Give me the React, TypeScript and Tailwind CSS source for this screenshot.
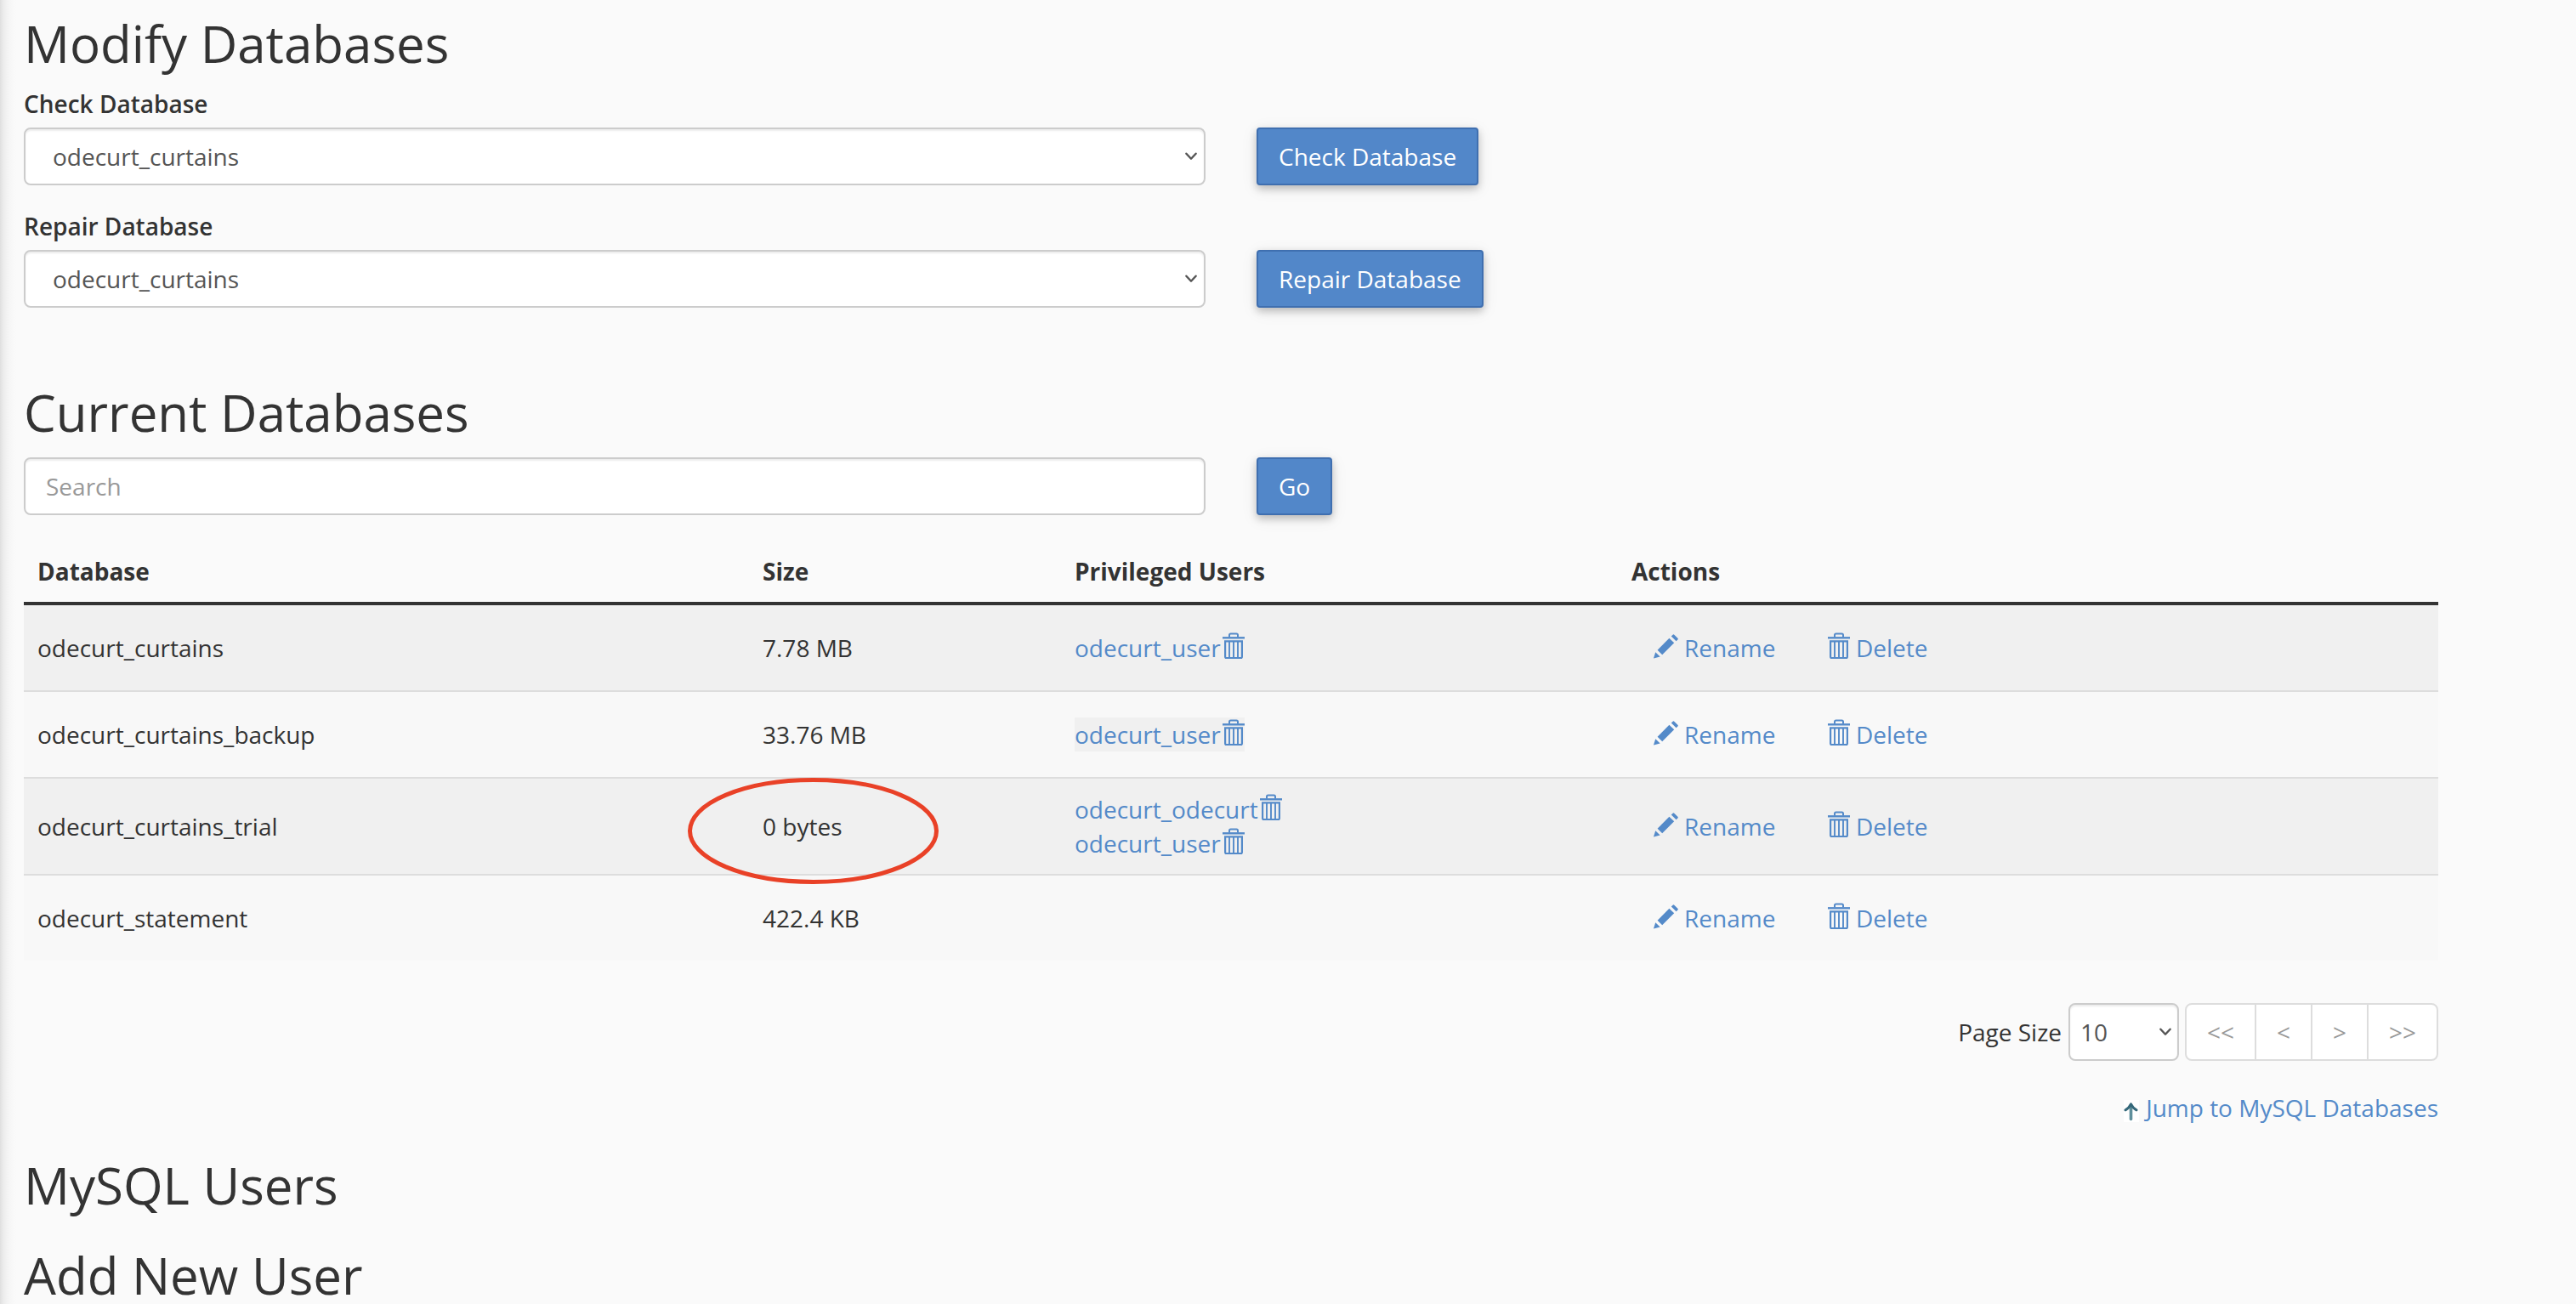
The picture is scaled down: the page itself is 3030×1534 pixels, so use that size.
import React from "react";

const databases = [
  { name: "odecurt_curtains", size: "7.78 MB", users: ["odecurt_user"] },
  { name: "odecurt_curtains_backup", size: "33.76 MB", users: ["odecurt_user"], highlight: true },
  { name: "odecurt_curtains_trial", size: "0 bytes", users: ["odecurt_odecurt", "odecurt_user"], circled: true },
  { name: "odecurt_statement", size: "422.4 KB", users: [] },
];

function TrashIcon() {
  return (
    <svg className="h-8 w-[26px] shrink-0" viewBox="0 0 26 32" fill="none" stroke="currentColor" strokeWidth="2">
      <path d="M0 7.3h26" strokeWidth="2.4" />
      <path d="M8 6.5V4a1.6 1.6 0 0 1 1.6-1.6h6.8A1.6 1.6 0 0 1 18 4v2.5" />
      <path d="M3.1 11.4h19.8v18.2a1.6 1.6 0 0 1-1.6 1.6H4.700a1.6 1.6 0 0 1-1.6-1.6z" strokeWidth="2.2" />
      <path d="M8 12v19M13 12v19M18 12v19" strokeWidth="1.900" />
    </svg>
  );
}

function PencilIcon() {
  return (
    <svg className="h-[29px] w-[29px] shrink-0" viewBox="0 0 29 29" fill="currentColor">
      <path d="M0 28.5 2.2 21.2 7.7 26.5z" />
      <path d="M4.6 18.7 18.4 4.7 24.2 10.3 10.2 24.2z" />
      <path d="M20.8 2.500 22.6.7a1.2 1.2 0 0 1 1.7 0L28.4 4.8a1.2 1.2 0 0 1 0 1.7L26.6 8.3z" />
    </svg>
  );
}

function Chevron() {
  return (
    <svg className="h-[10px] w-[14px] shrink-0" viewBox="0 0 14 10" fill="none" stroke="#555" strokeWidth="2.4" strokeLinecap="round" strokeLinejoin="round">
      <path d="M1.4 1.7 7 7.7l5.6-6" />
    </svg>
  );
}

const field =
  "flex h-[68px] w-[1390px] items-center rounded-lg border-2 border-[#ccc] bg-white shadow-[inset_0_2px_2px_rgba(0,0,0,0.075)]";

function Button({ children }: { children: React.ReactNode }) {
  return (
    <button className="h-[68px] rounded-[4px] border-2 border-[#3f6fb0] bg-[#5287c9] px-6 text-white shadow-[0_4px_10px_rgba(0,0,0,0.22),0_4px_20px_rgba(0,0,0,0.08)]">
      {children}
    </button>
  );
}

function SelectRow({ label, className }: { label: string; className: string }) {
  return (
    <div className={className}>
      <div className="mb-2 font-semibold">{label}</div>
      <div className="flex gap-[60px]">
        <div className={field + " justify-between pl-8 pr-2 text-[#555]"}>
          <span>odecurt_curtains</span>
          <Chevron />
        </div>
        <Button>{label}</Button>
      </div>
    </div>
  );
}

const cols = "grid grid-cols-[853px_367px_655px_965px]";

export default function App() {
  return (
    <div className="relative h-[1534px] w-[3030px] overflow-hidden bg-[#fafafa] pl-7 pt-[18px] font-['Open_Sans',sans-serif] text-[28px] leading-10 text-[#333]">
      <div className="absolute inset-y-0 left-0 w-[20px] bg-[linear-gradient(to_right,#dfdfdf_0%,#ececec_20%,#f4f4f4_45%,#f9f9f9_80%,#fafafa_100%)]" />
      <div className="w-[2840px]">
        <h2 className="text-[60px] leading-[66px]">Modify Databases</h2>
        <SelectRow label="Check Database" className="mt-[18px]" />
        <SelectRow label="Repair Database" className="mt-7" />

        <h2 className="mt-[90px] text-[60px] leading-[66px]">Current Databases</h2>
        <div className="mt-5 flex gap-[60px]">
          <div className={field + " px-6 text-[#999]"}>Search</div>
          <Button>Go</Button>
        </div>

        <div className="mt-[46px]">
          <div className={cols + " border-b-4 border-[#333] pb-4 font-bold"}>
            <div className="pl-4">Database</div>
            <div className="pl-4">Size</div>
            <div className="pl-4">Privileged Users</div>
            <div className="pl-4">Actions</div>
          </div>
          {databases.map((db, i) => (
            <div
              key={db.name}
              className={
                cols +
                " items-center " +
                (i > 0 ? "border-t-2 border-[#ddd] " : "") +
                (i % 2 === 0 ? "bg-[#f0f0f0] " : "bg-[#f8f8f8] ") +
                (db.users.length > 1 ? "h-[114px]" : i > 0 ? "h-[102px]" : "h-[100px]")
              }
            >
              <div className="pl-4">{db.name}</div>
              <div className="relative pl-4">
                {db.size}
                {db.circled && (
                  <svg className="absolute left-[-73px] top-[-38px] z-10 h-[126px] w-[297px]" viewBox="0 0 297 126" fill="none">
                    <ellipse cx="148.5" cy="63.5" rx="145" ry="60" stroke="#e94127" strokeWidth="5" />
                  </svg>
                )}
              </div>
              <div className="flex flex-col items-start pl-4">
                {db.users.map((u) => (
                  <a key={u} className={"flex h-10 text-[#548ac9] " + (db.highlight ? "bg-[#f0f0f0]" : "")}>
                    <span>{u}</span>
                    <span className="ml-0.5 mt-px"><TrashIcon /></span>
                  </a>
                ))}
              </div>
              <div className="flex pl-[42px] text-[#548ac9]">
                <a className="flex w-[205px]">
                  <span className="mr-[7px] mt-1"><PencilIcon /></span>
                  Rename
                </a>
                <a className="flex">
                  <span className="mr-[7px] mt-px"><TrashIcon /></span>
                  Delete
                </a>
              </div>
            </div>
          ))}
        </div>

        <div className="mt-[50px] flex h-[68px] items-center justify-end">
          <span className="mr-2">Page Size</span>
          <div className="mr-[7px] flex h-[68px] w-[130px] items-center justify-between rounded-lg border-2 border-[#ccc] bg-white pl-3 pr-[7px] text-[#555] shadow-[inset_0_2px_2px_rgba(0,0,0,0.075)]">
            <span>10</span>
            <Chevron />
          </div>
          <div className="flex h-[68px] w-[298px] items-stretch divide-x-2 divide-[#ddd] rounded-lg border-2 border-[#ddd] bg-white text-center leading-[64px] text-[#999]">
            <span className="w-[82px]">&lt;&lt;</span>
            <span className="w-[66px]">&lt;</span>
            <span className="w-[66px]">&gt;</span>
            <span className="flex-1">&gt;&gt;</span>
          </div>
        </div>

        <div className="mt-[35px] flex h-10 justify-end text-[#548ac9]">
          <span className="mr-2 mt-[11px] h-[26px] w-[18px] bg-white">
            <svg className="h-[26px] w-[18px]" viewBox="0 0 18 26" fill="none" strokeLinejoin="round" strokeLinecap="round">
              <path d="M8.500 22.500V6" stroke="#5f8f9c" strokeWidth="3.6" />
              <path d="M2 11.800C4.500 10.500 7 7.800 8.500 4.800 10 7.800 12.500 10.500 15 11.800" stroke="#35687a" strokeWidth="3" />
            </svg>
          </span>
          <a>Jump to MySQL Databases</a>
        </div>

        <h2 className="mt-[38px] text-[60px] leading-[66px]">MySQL Users</h2>
        <h2 className="mt-10 text-[60px] leading-[66px]">Add New User</h2>
      </div>
    </div>
  );
}
